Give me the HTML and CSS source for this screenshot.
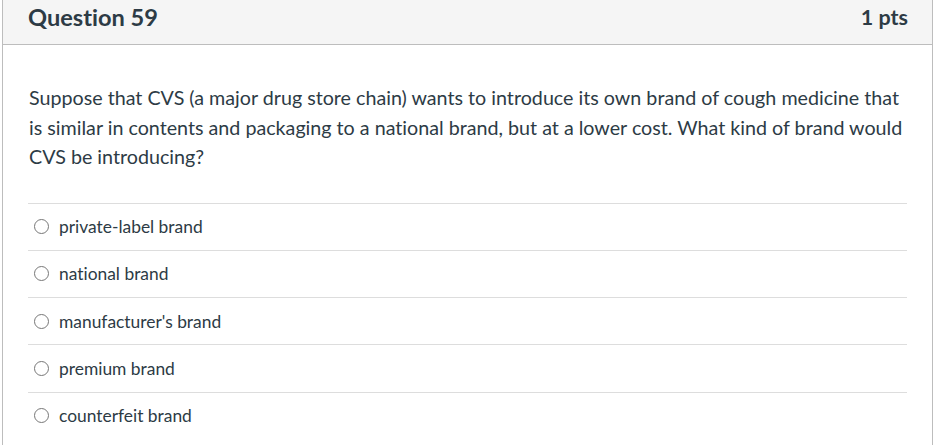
FILE: index.html
```html
<!DOCTYPE html>
<html>
<head>
<meta charset="utf-8">
<link rel="stylesheet" href="styles.css">
</head>
<body>
<div class="quiz">
  <div class="quiz-header">
    <h2 class="quiz-title">Question 59</h2>
    <span class="quiz-points">1 pts</span>
  </div>
  <div class="quiz-body">
    <p class="quiz-text">Suppose that CVS (a major drug store chain) wants to introduce its own brand of cough medicine that is similar in contents and packaging to a national brand, but at a lower cost. What kind of brand would CVS be introducing?</p>
    <div class="answers">
      <label class="answer"><span class="radio"></span><span class="answer-label">private-label brand</span></label>
      <label class="answer"><span class="radio"></span><span class="answer-label">national brand</span></label>
      <label class="answer"><span class="radio"></span><span class="answer-label">manufacturer's brand</span></label>
      <label class="answer"><span class="radio"></span><span class="answer-label">premium brand</span></label>
      <label class="answer"><span class="radio"></span><span class="answer-label">counterfeit brand</span></label>
    </div>
  </div>
</div>
</body>
</html>
```
FILE: styles.css
```css
html, body {
  margin: 0;
  padding: 0;
  background: #ffffff;
}
body {
  font-family: Lato, "Open Sans", sans-serif;
  color: #2d3b45;
  font-variant-ligatures: no-common-ligatures;
}
.quiz {
  margin-left: 2px;
  width: 929px;
  border-left: 1px solid #bdbdbd;
  border-right: 1px solid #bdbdbd;
}
.quiz-header {
  height: 44px;
  background: #f5f5f5;
  border-bottom: 1px solid #bdbdbd;
  display: flex;
  align-items: center;
  justify-content: space-between;
  padding: 0 24px 0 25px;
}
.quiz-title {
  margin: 0;
  font-size: 23.6px;
  font-weight: 700;
  color: #2d3b45;
  line-height: 1;
  margin-top: -8px;
}
.quiz-points {
  font-size: 21.5px;
  font-weight: 700;
  color: #2d3b45;
  line-height: 1;
  margin-top: -8px;
}
.quiz-body {
  padding: 38px 25px 20px 25px;
}
.quiz-text {
  margin: 0 0 31px 0;
  font-size: 19.7px;
  line-height: 29.5px;
  padding-left: 1px;
}
.answer {
  display: flex;
  align-items: center;
  height: 46.3px;
  border-top: 1px solid #dddddd;
  font-size: 17.4px;
}
.radio {
  width: 13px;
  height: 13px;
  border: 1px solid #777777;
  border-radius: 50%;
  margin-left: 6px;
  margin-right: 10px;
  flex: none;
}
.answer-label {
  color: #2d3b45;
}
```
